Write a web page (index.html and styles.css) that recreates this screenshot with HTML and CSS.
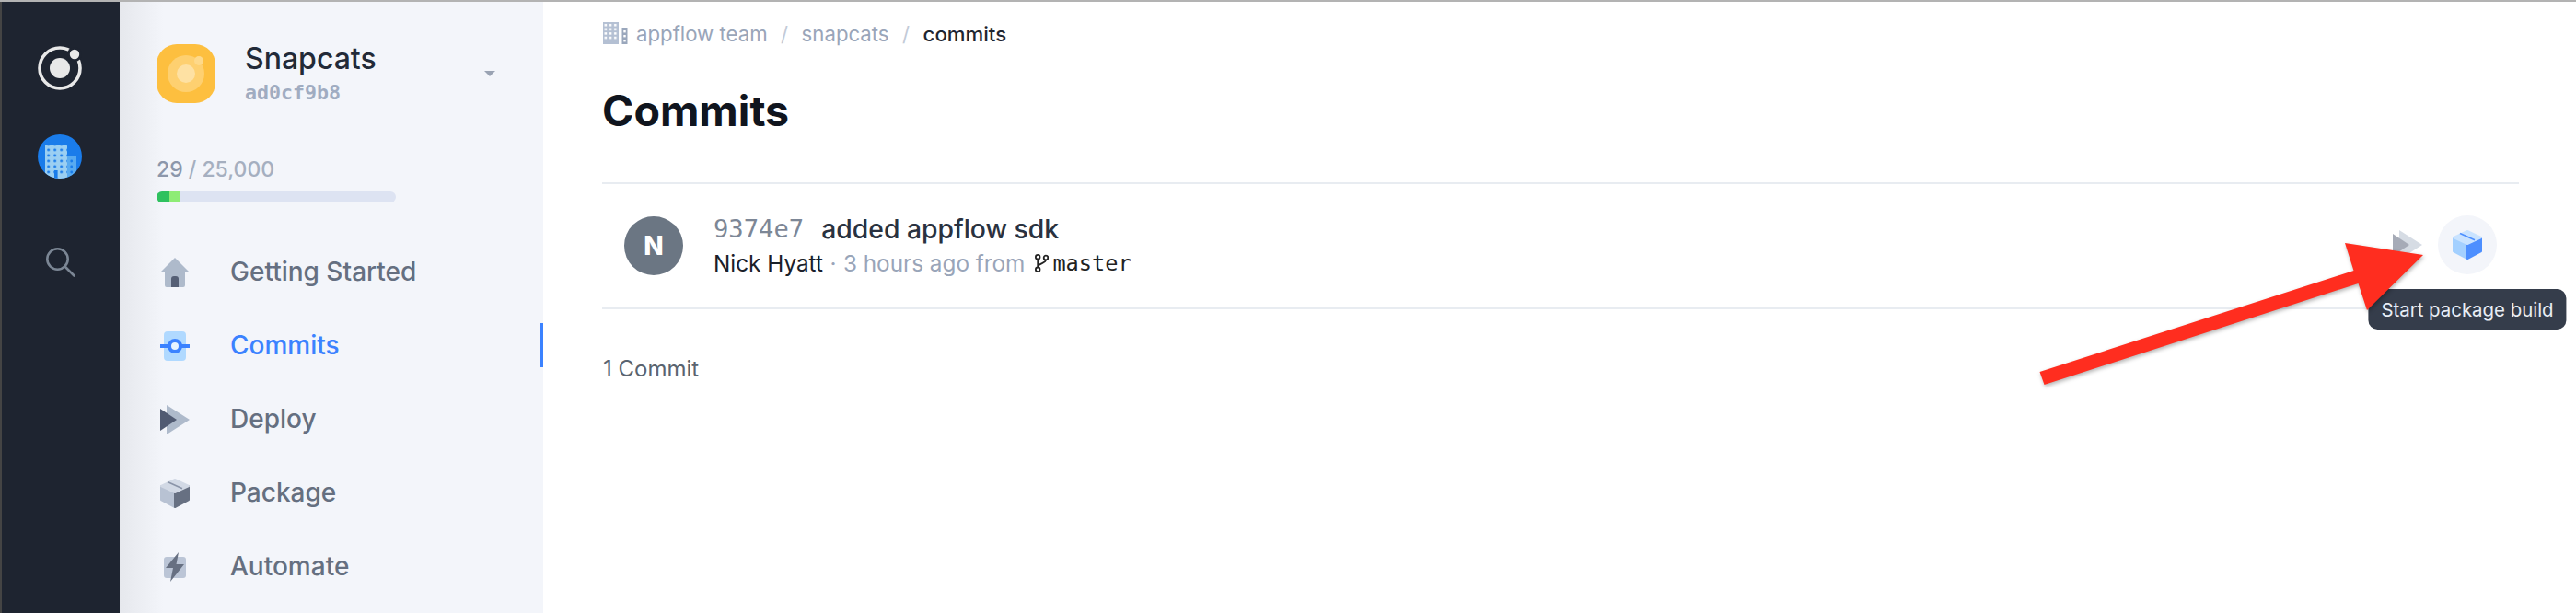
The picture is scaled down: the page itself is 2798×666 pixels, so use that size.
FILE: index.html
```html
<!DOCTYPE html>
<html lang="en">
  <head>
    <meta charset="UTF-8" />
    <title>Commits</title>
    <link rel="stylesheet" href="styles.css">
  </head>
  <body>
    <svg class="defs" width="0" height="0">
      <defs>
        <pattern id="windows" x="1.2" y="1.8" width="7" height="6" patternUnits="userSpaceOnUse">
          <circle cx="3.5" cy="3" r="1.5" fill="#1a7cea" />
        </pattern>
        <pattern id="crumb-windows" x="0.6" y="1" width="5.2" height="4.6" patternUnits="userSpaceOnUse">
          <rect x="1" y="1" width="2.6" height="2.4" fill="#fff" />
        </pattern>
      </defs>
    </svg>
    <nav class="rail">
      <svg class="rail-logo" width="48" height="48" viewBox="0 0 48 48">
        <circle cx="24" cy="24" r="22" fill="none" stroke="#e8e8e8" stroke-width="3.6" />
        <circle cx="24" cy="24" r="11" fill="#e8e8e8" />
        <circle cx="40" cy="9" r="8" fill="#1e2430" />
        <circle cx="40" cy="9" r="5.2" fill="#e8e8e8" />
      </svg>
      <svg class="rail-org" width="48" height="48" viewBox="0 0 48 48">
        <clipPath id="org-clip"><circle cx="24" cy="24" r="24" /></clipPath>
        <circle cx="24" cy="24" r="24" fill="#1a7cea" />
        <g clip-path="url(#org-clip)">
          <rect x="32" y="23" width="10" height="25" fill="#58aaf0" />
          <circle cx="36.7" cy="29" r="1.4" fill="#1a7cea" />
          <circle cx="36.7" cy="35" r="1.4" fill="#1a7cea" />
          <circle cx="36.7" cy="41" r="1.4" fill="#1a7cea" />
          <rect x="8" y="11" width="24" height="37" fill="#9bcff2" />
          <rect x="8" y="11" width="24" height="33" fill="url(#windows)" />
          <rect x="18" y="39" width="3.6" height="9" fill="#1a7cea" />
        </g>
      </svg>
      <svg class="rail-search" width="34" height="34" viewBox="0 0 34 34">
        <circle cx="13.5" cy="13.5" r="11.2" fill="none" stroke="#7b8694" stroke-width="2.6" />
        <path d="M21.5 21.5 L31.5 31.5" stroke="#7b8694" stroke-width="2.6" stroke-linecap="round" />
      </svg>
    </nav>

    <aside class="sidebar">
      <div class="app-head">
        <svg class="app-icon" width="64" height="64" viewBox="0 0 64 64">
          <rect width="64" height="64" rx="22" fill="#fdbf3f" />
          <circle cx="32" cy="32" r="20" fill="#fed070" />
          <circle cx="32" cy="32" r="10" fill="#fee1a3" />
          <circle cx="46" cy="18" r="5" fill="#fed98a" />
        </svg>
        <div class="app-names">
          <div class="app-name">Snapcats</div>
          <div class="app-sha">ad0cf9b8</div>
        </div>
        <span class="caret"></span>
      </div>

      <div class="usage">
        <div class="usage-text"><span class="usage-count">29</span> / 25,000</div>
        <div class="usage-bar">
          <span class="usage-used"></span>
          <span class="usage-extra"></span>
        </div>
      </div>

      <ul class="menu">
        <li class="menu-item">
          <svg width="32" height="32" viewBox="0 0 32 32">
            <path d="M16 0 L32 16 H27 V30 Q27 32 25 32 H7 Q5 32 5 30 V16 H0 Z" fill="#aebacb" />
            <path d="M12 32 V23 Q12 20 15 20 H17 Q20 20 20 23 V32 Z" fill="#555f75" />
          </svg>
          Getting Started
        </li>
        <li class="menu-item active">
          <svg width="32" height="32" viewBox="0 0 32 32">
            <rect x="4" width="24" height="32" rx="4" fill="#b0d9ff" />
            <rect y="14" width="32" height="4" fill="#3b82ff" />
            <circle cx="16" cy="16" r="6" fill="#e6f3ff" stroke="#3b82ff" stroke-width="4" />
          </svg>
          Commits
        </li>
        <li class="menu-item">
          <svg width="32" height="32" viewBox="0 0 32 32">
            <path d="M7 0 L32 16 L7 32 Z" fill="#aebacb" />
            <path d="M0 4 L18 16 L0 28 Z" fill="#505a72" />
          </svg>
          Deploy
        </li>
        <li class="menu-item">
          <svg width="32" height="32" viewBox="0 0 32 32" stroke-linejoin="round">
            <path d="M1 8 L16 15 V31 L1 23 Z" fill="#b8c2d3" stroke="#b8c2d3" stroke-width="2" />
            <path d="M31 8 L16 15 V31 L31 23 Z" fill="#677082" stroke="#677082" stroke-width="2" />
            <path d="M16 1 L31 8 L16 15 L1 8 Z" fill="#d2d9e5" stroke="#d2d9e5" stroke-width="2" />
            <path d="M8 3.4 L24 10.8" stroke="#8a94a8" stroke-width="1.6" />
          </svg>
          Package
        </li>
        <li class="menu-item">
          <svg width="32" height="32" viewBox="0 0 32 32">
            <rect x="4" y="5" width="24" height="23" rx="3" fill="#bbc5d6" />
            <path d="M20 0 L6 17 H14 L11 32 L26 13 H17.5 Z" fill="#677082" />
          </svg>
          Automate
        </li>
      </ul>
    </aside>

    <main class="content">
      <div class="crumbs">
        <svg class="crumb-icon" width="27" height="24" viewBox="0 0 27 24">
          <rect width="17" height="24" fill="#b4c0d3" />
          <rect width="17" height="20" fill="url(#crumb-windows)" />
          <rect x="20.5" y="6" width="6" height="18" fill="#9aa7bc" />
          <rect x="22.3" y="9" width="2.4" height="2.4" fill="#fff" />
          <rect x="22.3" y="14" width="2.4" height="2.4" fill="#fff" />
          <rect x="22.3" y="19" width="2.4" height="2.4" fill="#fff" />
        </svg>
        <span>appflow team</span>
        <span class="crumb-sep">/</span>
        <span>snapcats</span>
        <span class="crumb-sep">/</span>
        <span class="crumb-here">commits</span>
      </div>

      <h1>Commits</h1>

      <div class="commit">
        <div class="avatar">N</div>
        <div class="commit-body">
          <div class="commit-title">
            <span class="sha">9374e7</span>
            <span class="message">added appflow sdk</span>
          </div>
          <div class="commit-meta">
            <span class="author">Nick Hyatt</span>
            <span class="dot">·</span>
            <span>3 hours ago from</span>
            <svg class="branch-icon" width="15" height="20" viewBox="0 0 15 20">
              <circle cx="3.2" cy="3.2" r="2.3" fill="none" stroke="#222" stroke-width="1.8" />
              <circle cx="3.2" cy="16.8" r="2.3" fill="none" stroke="#222" stroke-width="1.8" />
              <circle cx="12" cy="4" r="2.3" fill="none" stroke="#222" stroke-width="1.8" />
              <path d="M3.2 5.5 V14.5 M12 6.3 C12 10.5 4 9.5 3.2 14" fill="none" stroke="#222" stroke-width="1.8" />
            </svg>
            <span class="branch">master</span>
          </div>
        </div>
        <div class="commit-actions">
          <div class="action">
            <svg class="faded" width="32" height="32" viewBox="0 0 32 32">
              <path d="M7 0 L32 16 L7 32 Z" fill="#aebacb" />
              <path d="M0 4 L18 16 L0 28 Z" fill="#505a72" />
            </svg>
          </div>
          <div class="action hovered">
            <svg width="32" height="32" viewBox="0 0 32 32" stroke-linejoin="round">
              <path d="M1 8 L16 15 V31 L1 23 Z" fill="#a3d0ff" stroke="#a3d0ff" stroke-width="2" />
              <path d="M31 8 L16 15 V31 L31 23 Z" fill="#4d8fff" stroke="#4d8fff" stroke-width="2" />
              <path d="M16 1 L31 8 L16 15 L1 8 Z" fill="#c9e3ff" stroke="#c9e3ff" stroke-width="2" />
              <path d="M8 3.4 L24 10.8" stroke="#4d8fff" stroke-width="1.6" />
            </svg>
            <div class="tooltip">Start package build</div>
          </div>
        </div>
      </div>

      <div class="commit-count">1 Commit</div>
    </main>

    <svg class="red-arrow" width="2798" height="666" viewBox="0 0 2798 666">
      <path d="M2547 264 L2632 277 L2571 337 L2561.5 308 L2220.5 418 L2215.5 404 L2556.5 294 Z" fill="#ff2d1f" />
    </svg>
  </body>
</html>
```

FILE: styles.css
```css
* {
  box-sizing: border-box;
}

html, body {
  margin: 0;
  height: 100%;
}

body {
  display: flex;
  height: 666px;
  overflow: hidden;
  border-top: 2px solid #b3b3b3;
  font-family: Inter, "Liberation Sans", sans-serif;
  background-color: #fff;
}

.defs {
  position: absolute;
}

.rail {
  flex: none;
  width: 130px;
  display: flex;
  flex-direction: column;
  align-items: center;
  padding-top: 48px;
  border-left: 2px solid #444;
  background-color: #1e2430;
}

.rail-logo {
  margin-left: -2px;
}

.rail-org {
  margin-top: 48px;
  margin-left: -2px;
}

.rail-search {
  margin-top: 74px;
  margin-left: 0;
}

.sidebar {
  flex: none;
  width: 460px;
  padding: 46px 0 0 40px;
  background: linear-gradient(90deg, #e6e8ed 0, #f3f5fa 48px);
}

.app-head {
  display: flex;
  align-items: center;
  gap: 33px;
  height: 64px;
  padding-right: 52px;
}

.app-names {
  flex: 1;
  align-self: flex-start;
  margin-left: -1px;
}

.app-name {
  font-size: 32px;
  line-height: 36px;
  margin-top: -2px;
  font-weight: 500;
  color: #222a38;
}

.app-sha {
  margin-top: 6px;
  font-family: "DejaVu Sans Mono", monospace;
  font-size: 21.6px;
  line-height: 26px;
  font-weight: 700;
  color: #a0acc1;
}

.caret {
  width: 0;
  height: 0;
  border-left: 6px solid transparent;
  border-right: 6px solid transparent;
  border-top: 6px solid #9aa3b3;
}

.usage {
  margin-top: 57px;
}

.usage-text {
  font-size: 23px;
  line-height: 30px;
  font-weight: 500;
  color: #a5afc0;
}

.usage-count {
  color: #8c97ab;
}

.usage-bar {
  display: flex;
  width: 260px;
  height: 12px;
  margin-top: 9px;
  border-radius: 6px;
  overflow: hidden;
  background-color: #dde3f2;
}

.usage-used {
  width: 14px;
  background-color: #2fc15f;
}

.usage-extra {
  width: 12px;
  background-color: #8eec75;
}

.menu {
  list-style: none;
  margin: 51px 0 0;
  padding: 0;
}

.menu-item {
  display: flex;
  align-items: center;
  gap: 44px;
  height: 48px;
  margin-bottom: 32px;
  padding-left: 4px;
  font-size: 28px;
  font-weight: 500;
  color: #656f80;
}

.menu-item svg {
  margin-top: 2px;
}

.menu-item.active {
  color: #3b82ff;
  border-right: 4px solid #3b82ff;
}

.content {
  flex: 1;
  min-width: 0;
  padding: 0 62px 0 64px;
}

.crumbs {
  display: flex;
  align-items: center;
  height: 24px;
  margin-top: 22px;
  margin-left: 1px;
  font-size: 22.2px;
  color: #99a5b9;
}

.crumb-icon {
  margin-right: 9px;
}

.crumb-sep {
  margin: 0 14.5px;
  color: #c2cad7;
}

.crumb-here {
  color: #1f2631;
  font-weight: 500;
}

h1 {
  margin: 43px 0 0 0;
  font-size: 46.5px;
  line-height: 58px;
  font-weight: 700;
  color: #10151e;
}

.commit {
  display: flex;
  align-items: center;
  height: 138px;
  margin-top: 49px;
  padding: 0 24px;
  border-top: 2px solid #e8ecf1;
  border-bottom: 2px solid #e8ecf1;
}

.avatar {
  flex: none;
  width: 64px;
  height: 64px;
  display: flex;
  align-items: center;
  justify-content: center;
  margin-right: 33px;
  border-radius: 50%;
  background-color: #6b7683;
  color: #fff;
  font-size: 28px;
  font-weight: 800;
}

.commit-body {
  flex: 1;
}

.commit-title {
  display: flex;
  align-items: center;
  gap: 19px;
  height: 34px;
}

.sha {
  font-family: "DejaVu Sans Mono", monospace;
  font-size: 27.2px;
  color: #7d8796;
}

.message {
  font-size: 28.3px;
  font-weight: 500;
  color: #2a3240;
}

.commit-meta {
  display: flex;
  align-items: center;
  height: 34px;
  margin-top: 3px;
  font-size: 24.3px;
  color: #99a5b9;
}

.author {
  color: #1a2029;
}

.dot {
  margin: 0 7.5px;
}

.branch-icon {
  margin: 0 4px 0 11px;
}

.branch {
  font-family: "DejaVu Sans Mono", monospace;
  font-size: 23.6px;
  color: #222;
}

.commit-actions {
  display: flex;
  margin-top: -2px;
}

.action {
  position: relative;
  width: 64px;
  height: 64px;
  display: flex;
  align-items: center;
  justify-content: center;
  border-radius: 50%;
}

.action.hovered {
  margin-left: 1px;
  background-color: #f3f5fa;
}

.faded {
  opacity: 0.5;
}

.tooltip {
  position: absolute;
  top: 80px;
  left: 50%;
  transform: translateX(-50%);
  padding: 0 14px;
  height: 44px;
  display: flex;
  align-items: center;
  white-space: nowrap;
  border-radius: 10px;
  background-color: #353d4b;
  color: #e8edf5;
  font-size: 20.4px;
}

.commit-count {
  margin-top: 50px;
  margin-left: 1px;
  font-size: 24px;
  line-height: 30px;
  color: #5a6470;
}

.red-arrow {
  position: absolute;
  top: 0;
  left: 0;
  filter: drop-shadow(1px 2px 2px rgba(0, 0, 0, 0.3));
}
```
